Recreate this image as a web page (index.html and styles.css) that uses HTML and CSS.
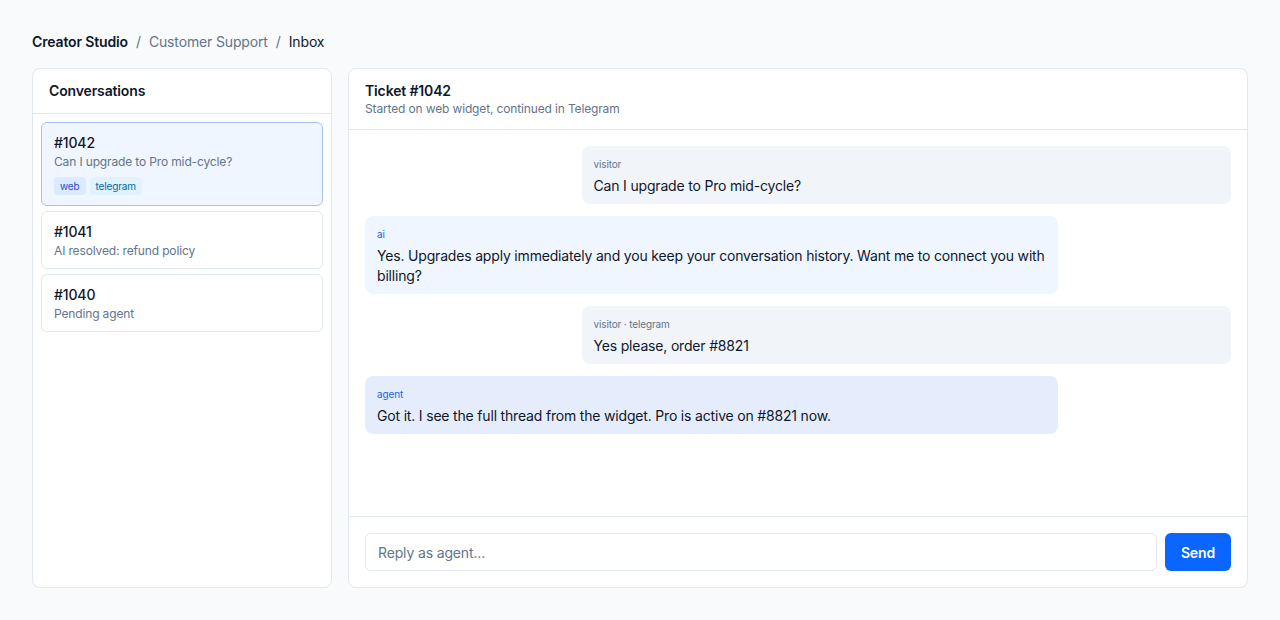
FILE: index.html
```html
<!DOCTYPE html>
<html lang="en">
<head>
    <meta charset="UTF-8">
    <meta name="viewport" content="width=device-width, initial-scale=1.0">
    <title>Inbox - Creator Studio</title>
    <link rel="stylesheet" href="styles.css">
</head>
<body>
    <div class="page">
        <nav class="crumbs">
            <span class="crumb-root">Creator Studio</span>
            <span class="sep">/</span>
            <span class="crumb-mid">Customer Support</span>
            <span class="sep">/</span>
            <span class="crumb-current">Inbox</span>
        </nav>

        <div class="layout">
            <aside class="card sidebar">
                <div class="card-head">
                    <h2>Conversations</h2>
                </div>
                <div class="conv-list">
                    <div class="conv selected">
                        <div class="conv-id">#1042</div>
                        <div class="conv-sub">Can I upgrade to Pro mid-cycle?</div>
                        <div class="tags">
                            <span class="tag tag-web">web</span>
                            <span class="tag tag-tg">telegram</span>
                        </div>
                    </div>
                    <div class="conv">
                        <div class="conv-id">#1041</div>
                        <div class="conv-sub">AI resolved: refund policy</div>
                    </div>
                    <div class="conv">
                        <div class="conv-id">#1040</div>
                        <div class="conv-sub">Pending agent</div>
                    </div>
                </div>
            </aside>

            <section class="card thread">
                <div class="card-head">
                    <h2>Ticket #1042</h2>
                    <div class="thread-sub">Started on web widget, continued in Telegram</div>
                </div>

                <div class="messages">
                    <div class="msg msg-visitor">
                        <div class="msg-label">visitor</div>
                        <div class="msg-text">Can I upgrade to Pro mid-cycle?</div>
                    </div>
                    <div class="msg msg-ai">
                        <div class="msg-label">ai</div>
                        <div class="msg-text">Yes. Upgrades apply immediately and you keep your conversation history. Want me to connect you with billing?</div>
                    </div>
                    <div class="msg msg-visitor">
                        <div class="msg-label">visitor · telegram</div>
                        <div class="msg-text">Yes please, order #8821</div>
                    </div>
                    <div class="msg msg-agent">
                        <div class="msg-label">agent</div>
                        <div class="msg-text">Got it. I see the full thread from the widget. Pro is active on #8821 now.</div>
                    </div>
                </div>

                <div class="composer">
                    <input type="text" placeholder="Reply as agent...">
                    <button>Send</button>
                </div>
            </section>
        </div>
    </div>
</body>
</html>
```

FILE: styles.css
```css
* {
    box-sizing: border-box;
}
body {
    margin: 0;
    font-family: Inter, "Noto Sans", sans-serif;
    letter-spacing: -0.009em;
    background-color: #f8fafc;
    color: #0f172a;
}
.page {
    height: 100vh;
    padding: 32px;
    display: flex;
    flex-direction: column;
    gap: 16px;
}
.crumbs {
    font-size: 14px;
    line-height: 20px;
    display: flex;
    gap: 8px;
}
.crumb-root {
    font-weight: 600;
}
.sep, .crumb-mid {
    color: #64748b;
}
.layout {
    flex: 1;
    display: flex;
    gap: 16px;
    min-height: 0;
}
.card {
    background: white;
    border: 1px solid #e2e8f0;
    border-radius: 8px;
    display: flex;
    flex-direction: column;
}
.sidebar {
    width: 300px;
    flex-shrink: 0;
}
.thread {
    flex: 1;
}
.card-head {
    padding: 12px 16px;
    border-bottom: 1px solid #e2e8f0;
}
.card-head h2 {
    margin: 0;
    font-size: 14px;
    line-height: 20px;
    font-weight: 600;
}
.thread-sub {
    font-size: 12px;
    line-height: 16px;
    color: #64748b;
}
.conv-list {
    padding: 8px;
    display: flex;
    flex-direction: column;
    gap: 5px;
}
.conv {
    border: 1px solid #e2e8f0;
    border-radius: 6px;
    padding: 10px 12px 8px;
}
.conv.selected {
    background: #eff6ff;
    border-color: #a3c4ee;
}
.conv-id {
    font-size: 14px;
    line-height: 20px;
    font-weight: 500;
}
.conv-sub {
    font-size: 12px;
    line-height: 18px;
    color: #64748b;
}
.tags {
    margin: 6px 0 2px;
    display: flex;
    gap: 4px;
}
.tag {
    font-size: 10px;
    line-height: 14px;
    padding: 2px 6px;
    border-radius: 4px;
}
.tag-web {
    background: #dbeafe;
    color: #1d4ed8;
}
.tag-tg {
    background: #e0f2fe;
    color: #0369a1;
}
.messages {
    flex: 1;
    padding: 16px;
    display: flex;
    flex-direction: column;
    gap: 12px;
    overflow: auto;
}
.msg {
    border-radius: 8px;
    padding: 10px 12px 8px;
}
.msg-visitor {
    align-self: flex-end;
    width: 75%;
    background: #f1f5f9;
}
.msg-ai, .msg-agent {
    align-self: flex-start;
    width: 80%;
}
.msg-ai {
    background: #eff6ff;
}
.msg-agent {
    background: #e5edfd;
}
.msg-label {
    font-size: 10px;
    line-height: 16px;
    color: #64748b;
    margin-bottom: 4px;
}
.msg-ai .msg-label, .msg-agent .msg-label {
    color: #1d64e0;
}
.msg-text {
    font-size: 14px;
    line-height: 20px;
    letter-spacing: -0.013em;
}
.composer {
    border-top: 1px solid #e2e8f0;
    padding: 16px;
    display: flex;
    gap: 8px;
}
.composer input {
    flex: 1;
    height: 38px;
    border: 1px solid #e2e8f0;
    border-radius: 6px;
    padding: 0 12px;
    font-family: inherit;
    font-size: 14px;
    letter-spacing: inherit;
    color: #0f172a;
}
.composer input::placeholder {
    color: #64748b;
}
.composer button {
    height: 38px;
    padding: 0 16px;
    border: none;
    border-radius: 6px;
    background: #0a66ff;
    color: white;
    font-family: inherit;
    font-size: 14px;
    font-weight: 600;
    letter-spacing: inherit;
    cursor: pointer;
}
```
